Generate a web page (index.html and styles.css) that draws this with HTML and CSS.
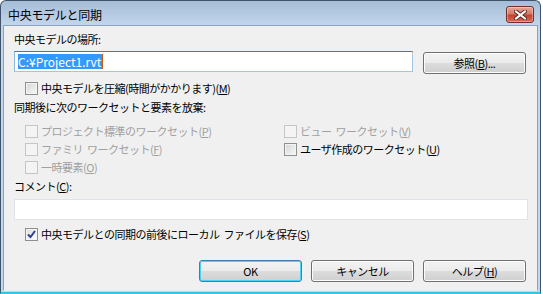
FILE: index.html
```html
<!DOCTYPE html>
<html lang="ja">
<head>
    <meta charset="UTF-8">
    <title>中央モデルと同期</title>
    <link rel="stylesheet" href="styles.css">
</head>
<body>
    <div class="window">
        <div class="titlebar">
            <span class="title">中央モデルと同期</span>
            <button class="close-btn">
                <svg width="13" height="10" viewBox="0 0 13 10">
                    <path d="M2 1.5 L11 8.5 M11 1.5 L2 8.5" stroke="#5a2a25" stroke-width="4" stroke-linecap="square"/>
                    <path d="M2 1.5 L11 8.5 M11 1.5 L2 8.5" stroke="#ffffff" stroke-width="2" stroke-linecap="square"/>
                </svg>
            </button>
        </div>
        <div class="content">
            <div class="label first-label">中央モデルの場所:</div>
            <div class="path-row">
                <div class="textbox focused"><span class="selected">C:¥Project1.rvt</span><span class="caret"></span></div>
                <button class="btn">参照(<u>B</u>)...</button>
            </div>
            <label class="check compress">
                <span class="box"></span>中央モデルを圧縮(時間がかかります)(<u>M</u>)
            </label>

            <div class="label discard-label">同期後に次のワークセットと要素を放棄:</div>
            <div class="discard-grid">
                <label class="check disabled"><span class="box"></span>プロジェクト標準のワークセット(<u>P</u>)</label>
                <label class="check disabled"><span class="box"></span>ビュー<span class="gap"></span>ワークセット(<u>V</u>)</label>
                <label class="check disabled"><span class="box"></span>ファミリ<span class="gap"></span>ワークセット(<u>F</u>)</label>
                <label class="check"><span class="box"></span>ユーザ作成のワークセット(<u>U</u>)</label>
                <label class="check disabled"><span class="box"></span>一時要素(<u>O</u>)</label>
            </div>

            <div class="label comment-label">コメント(<u>C</u>):</div>
            <div class="textbox comment"></div>

            <label class="check save-local">
                <span class="box checked">
                    <svg width="9" height="9" viewBox="0 0 9 9">
                        <path d="M1 4.5 L3.5 7 L8 1" fill="none" stroke="#2a3f8f" stroke-width="2"/>
                    </svg>
                </span>中央モデルとの同期の前後にローカル<span class="gap"></span>ファイルを保存(<u>S</u>)
            </label>

            <div class="button-row">
                <button class="btn default">OK</button>
                <button class="btn">キャンセル</button>
                <button class="btn">ヘルプ(<u>H</u>)</button>
            </div>
        </div>
    </div>
</body>
</html>
```
FILE: styles.css
```css
body {
    margin: 0;
    background-color: #ffffff;
    font-family: "Noto Sans CJK JP", "Noto Sans", sans-serif;
    font-size: 11px;
    color: #000;
}
.window {
    width: 541px;
    height: 294px;
    box-sizing: border-box;
    border: 1px solid #3f5468;
    border-bottom: 2px solid #34c4ea;
    border-radius: 6px 6px 0 0;
    background: linear-gradient(#a6bdd7, #c3d6ec 25px, #c3d6ec);
    padding: 0 2px 1px 2px;
    display: flex;
    flex-direction: column;
}
.titlebar {
    height: 24px;
    display: flex;
    align-items: center;
    justify-content: space-between;
    padding: 0 4px 0 5px;
}
.title {
    font-size: 12px;
    line-height: 14px;
    letter-spacing: -0.3px;
    margin-top: 3px;
}
.close-btn {
    width: 28px;
    height: 17px;
    margin-top: 3px;
    border: 1px solid #6e2f28;
    border-radius: 3px;
    background: linear-gradient(#e6a597, #d47c6a 45%, #c2432f 55%, #d46e55);
    box-shadow: inset 0 0 0 1px rgba(255, 255, 255, 0.35);
    padding: 0;
    display: flex;
    align-items: center;
    justify-content: center;
}
.content {
    flex: 1;
    background-color: #f0f0f0;
    border: 1px solid #8ba2bd;
    border-bottom-color: #e8eef4;
    padding: 0 11px 0 10px;
    letter-spacing: -0.5px;
}
.label {
    line-height: 14px;
}
.first-label {
    margin-top: 6px;
}
u {
    text-decoration: underline;
    text-underline-offset: 1px;
}
.gap {
    display: inline-block;
    width: 4px;
}
.path-row {
    display: flex;
    align-items: flex-start;
    justify-content: space-between;
    margin-top: 5px;
}
.textbox {
    box-sizing: border-box;
    height: 21px;
    background-color: #fff;
    border: 1px solid #e0e3e8;
    display: flex;
    align-items: center;
    padding-left: 3px;
}
.textbox.focused {
    width: 399px;
    border-color: #a4c5e0;
    border-top-color: #3d7bad;
    border-left-color: #8fb6d8;
}
.selected {
    background-color: #3399ff;
    color: #fff;
    font-size: 12px;
    line-height: 15px;
    padding-right: 1px;
    letter-spacing: 0;
}
.caret {
    width: 1px;
    height: 15px;
    background-color: #c85a00;
}
.btn {
    box-sizing: border-box;
    width: 103px;
    height: 22px;
    border: 1px solid #707070;
    border-radius: 3px;
    background: linear-gradient(#f2f2f2, #ebebeb 50%, #dddddd 50%, #cfcfcf);
    box-shadow: inset 0 0 0 1px #fcfcfc;
    font-family: inherit;
    font-size: 11px;
    letter-spacing: -0.5px;
    color: #000;
    padding: 0;
}
.path-row .btn {
    margin-top: 1px;
}
.btn.default {
    border-color: #3c7fb1;
    box-shadow: inset 0 0 0 1px #48d3f8;
}
.check {
    display: flex;
    align-items: center;
    height: 16px;
    line-height: 16px;
    white-space: nowrap;
}
.box {
    box-sizing: border-box;
    width: 13px;
    height: 13px;
    margin-right: 3px;
    border: 1px solid #8e8f8f;
    background: linear-gradient(135deg, #d5d5d5, #f9f9f9);
    box-shadow: inset 0 0 0 1px #f4f4f4;
    display: flex;
    align-items: center;
    justify-content: center;
    flex-shrink: 0;
}
.box.checked {
    background: linear-gradient(135deg, #dcdcdc, #ffffff);
}
.check.disabled {
    color: #a0a0a0;
}
.check.disabled .box {
    border-color: #c5c5c5;
    background: #f4f4f4;
    box-shadow: none;
}
.compress {
    margin: 6px 0 0 11px;
}
.discard-label {
    margin-top: 4px;
}
.discard-grid {
    display: grid;
    grid-template-columns: 259px auto;
    grid-auto-rows: 16px;
    row-gap: 2px;
    margin: 9px 0 0 11px;
}
.comment-label {
    margin-top: 4px;
}
.textbox.comment {
    margin-top: 6px;
    width: 514px;
}
.save-local {
    margin: 6px 0 0 11px;
}
.button-row {
    display: flex;
    justify-content: flex-end;
    gap: 9px;
    margin-top: 18px;
}
```
